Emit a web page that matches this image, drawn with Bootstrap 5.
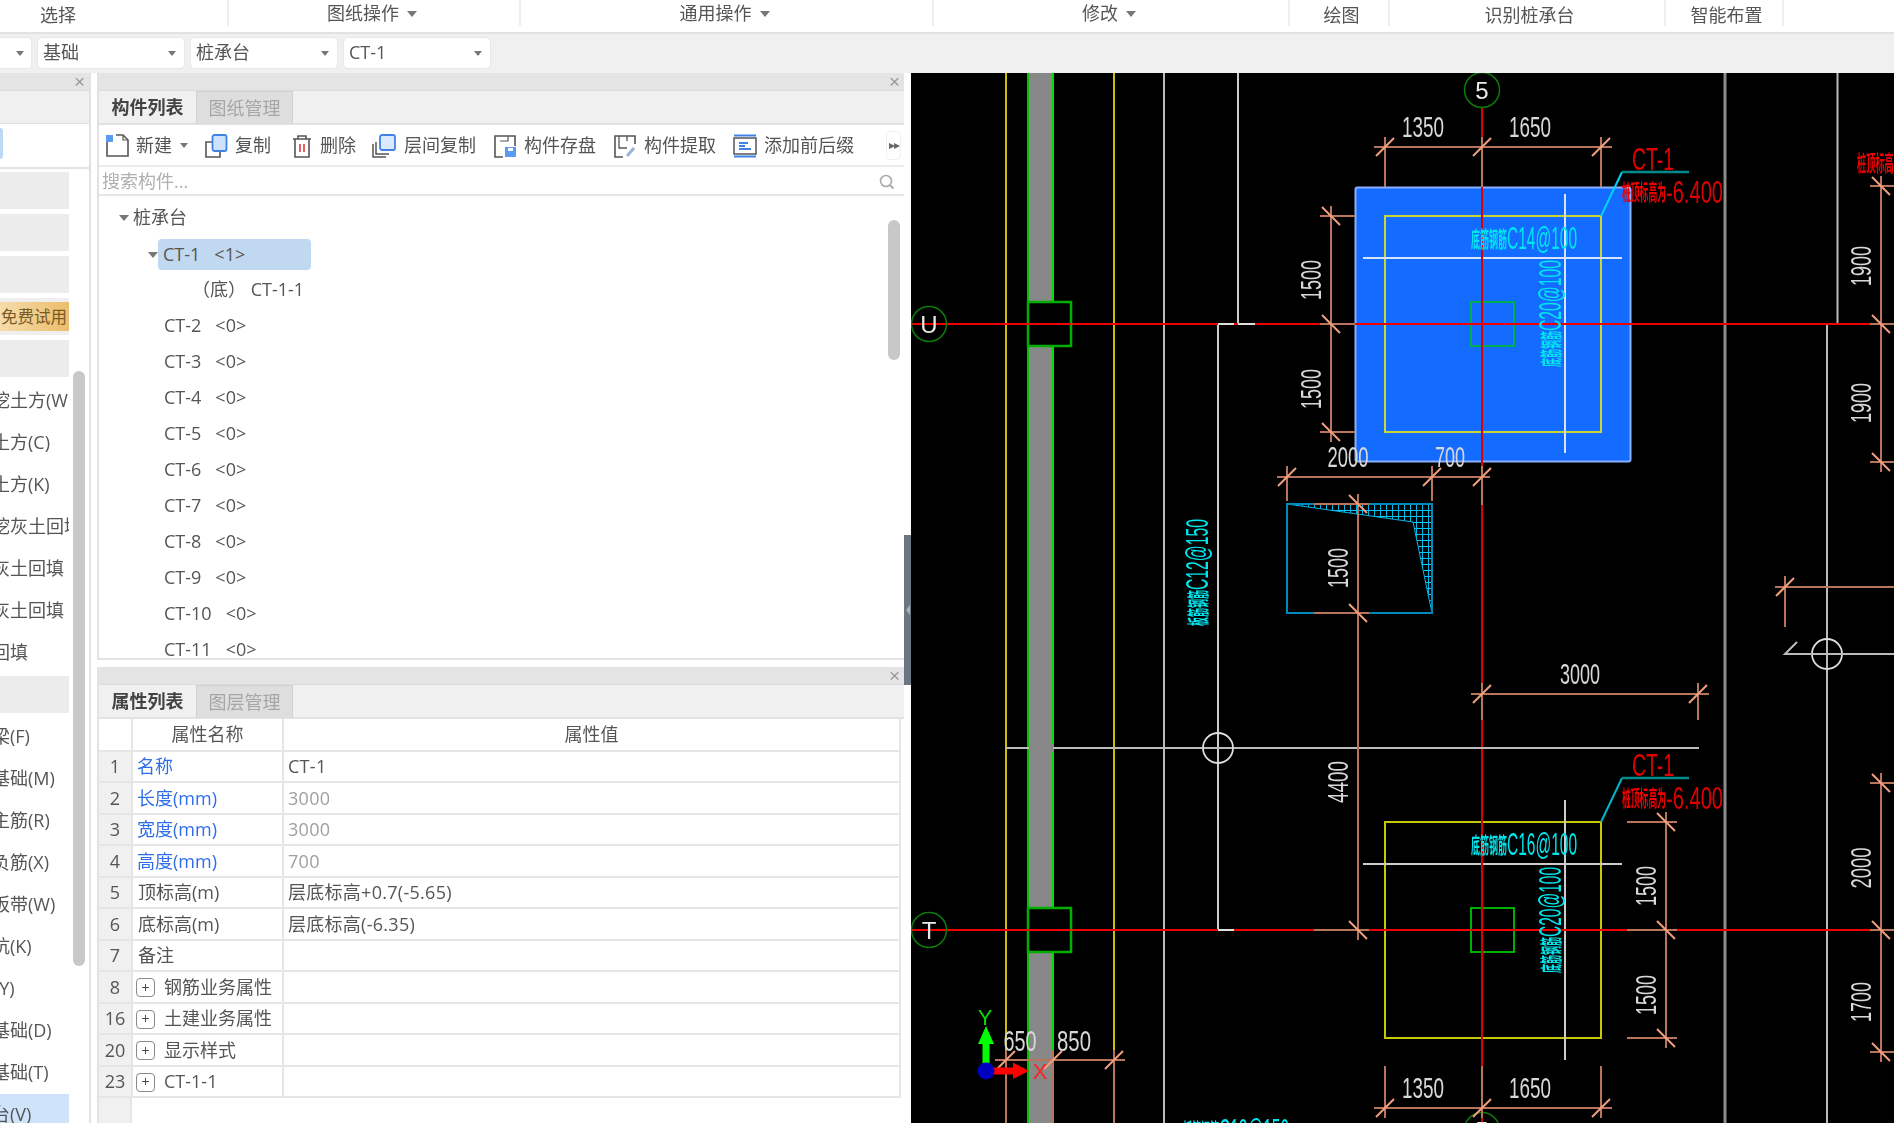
<!DOCTYPE html>
<html lang="zh-CN">
<head>
  <meta charset="UTF-8" />
  <title>桩承台</title>
  <link href="https://cdn.jsdelivr.net/npm/bootstrap@5.3.0/dist/css/bootstrap.min.css" rel="stylesheet" />
  <style>
    body { margin: 0; background: #fff; color: #555; font-family: "Open Sans", "Noto Sans CJK SC", sans-serif; font-size: 18px; line-height: 1.2; overflow: hidden; }
    .app-shell { width: 1894px; height: 1123px; overflow: hidden; filter: blur(.35px); }

    /* ribbon */
    .ribbon { height: 34px; border-bottom: 2px solid #e2e2e2; }
    .rb-cell { height: 26px; border-right: 2px solid #eee; flex: none; padding-top: 6px; }
    .rb-high { padding-top: 1px; padding-right: 4px; }
    .rb-low { padding-left: 5px; }
    .rb-first { width: 229px; padding-left: 40px; justify-content: flex-start !important; }
    .w-292 { width: 292px; } .w-413 { width: 413px; } .w-356 { width: 356px; }
    .w-100px { width: 100px; } .w-276 { width: 276px; } .w-118 { width: 118px; }
    .caret-down { display: inline-block; width: 0; height: 0; border-left: 5px solid transparent; border-right: 5px solid transparent; border-top: 6px solid #777; }
    .caret-sm { border-left-width: 4px; border-right-width: 4px; border-top-width: 5px; }

    /* selector strip */
    .strip { height: 39px; background: #f0f0f0; padding-top: 3px; gap: 5px; }
    .pick { width: 148px; height: 32px; background: #fff; border: 1px solid #e8e8e8; border-radius: 5px; padding: 0 8px 0 5px; flex: none; }
    .pick-stub { width: 32px; justify-content: flex-end !important; padding-right: 7px; border-left: 0; border-radius: 0 5px 5px 0; }

    /* left list */
    .side { width: 91px; flex: none; border-right: 2px solid #e2e2e2; overflow: hidden; position: relative; }
    .pane-head { height: 18px; background: #e4e4e4; border-bottom: 1px solid #dcdcdc; padding-right: 4px; }
    .pane-x { color: #9a9a9a; font-size: 19px; line-height: 16px; font-family: "Liberation Sans", sans-serif; }
    .side-tabs { height: 33px; background: #f0f0f0; border-bottom: 1px solid #ddd; }
    .side-pick { height: 41px; border-bottom: 2px solid #e2e2e2; }
    .side-pill { width: 3px; height: 31px; background: #bcd8f5; border-radius: 0 3px 3px 0; margin-top: 4px; }
    .side-list { padding-top: 1px; }
    .side-row { height: 42px; width: 69px; overflow: hidden; white-space: nowrap; display: flex; align-items: center; }
    .side-row > span { margin-left: -8px; }
    .side-row > span.shift-y { margin-left: -6px; }
    .row-gray { background: #ececec; background-clip: content-box; padding: 2px 0 3px; }
    .row-trial { background: #efefef; background-clip: content-box; padding: 2px 0 3px; }
    .trial-tag { display: block; width: 69px; height: 29px; line-height: 29px; margin: 0 !important; padding-left: 1px; font-size: 16.5px; color: #7b5a25; background: linear-gradient(90deg, #f5dcaa, #ecbd6c); }
    .row-on { background: #cfe3fb; }
    .side-scroll { position: absolute; left: 73px; top: 298px; width: 12px; height: 595px; background: #c8c8c8; border-radius: 6px; }

    .side-gap { width: 6px; flex: none; }

    /* middle panes */
    .mid { width: 807px; flex: none; }
    .pane { border-left: 2px solid #e2e2e2; }
    .pane-up { height: 587px; border-bottom: 2px solid #e2e2e2; overflow: hidden; }
    .pane-down { height: 456px; margin-top: 7px; overflow: hidden; }
    .tabbar { height: 34px; background: #f0f0f0; border-bottom: 2px solid #e2e2e2; }
    .tab-item { width: 97px; height: 33px; line-height: 32px; text-align: center; flex: none; }
    .tab-on { font-weight: 700; color: #444; }
    .tab-off { background: #dedede; color: #a6a6a6; border: 1px solid #d2d2d2; border-bottom: 0; }
    .tools { height: 42px; border-bottom: 2px solid #ececec; padding: 1px 0 0 6px; position: relative; }
    .tool { color: #555; white-space: nowrap; flex: none; }
    .tool svg { flex: none; margin-right: 7px; }
    .tool-new { margin-right: 16px; }
    .tool-copy { margin-right: 20px; }
    .tool-del { margin-right: 16px; }
    .tool-floor { margin-right: 17px; }
    .tool-save { margin-right: 17px; }
    .tool-pick { margin-right: 17px; }
    .tool-more { position: absolute; left: 787px; top: 6px; width: 15px; height: 29px; border: 1px solid #f0f0f0; border-radius: 4px; font-size: 12px; color: #666; letter-spacing: -1px; }
    .finder { height: 29px; border-bottom: 2px solid #e6e6e6; padding: 2px 9px 0 3px; color: #b0b0b0; }
    .tree { height: 464px; padding-top: 4px; position: relative; overflow: hidden; }
    .tree-row { height: 36px; white-space: nowrap; }
    .lv-0 { padding-left: 20px; }
    .lv-1 { padding-left: 65px; }
    .lv-2 { padding-left: 93px; }
    .tree-on { position: relative; margin: 3px 0 2px 59px; padding: 0 5px; width: 153px; height: 31px; background: #c0d8f0; border-radius: 4px; }
    .tree-caret { margin-right: 4px; }
    .tree-caret-abs { position: absolute; left: -10px; top: 13px; }
    .tree-scroll { position: absolute; left: 789px; top: 24px; width: 12px; height: 140px; background: #c8c8c8; border-radius: 6px; }

    /* property grid */
    .prop-grid { width: 802px; table-layout: fixed; margin: 0; border-collapse: collapse; color: #555; }
    .prop-grid th, .prop-grid td { height: 31.5px; padding: 2px 5px 0; border: 0; border-right: 2px solid #e6e6e6; border-bottom: 2px solid #e6e6e6; font-weight: 400; color: #555; background: #fff; white-space: nowrap; vertical-align: middle; box-shadow: none; }
    .prop-grid .col-no { width: 33px; background: #f0f0f0; text-align: center; padding: 2px 0 0; }
    .prop-grid thead .col-no { background: #fff; }
    .prop-grid .col-name { width: 151px; }
    .prop-grid th { text-align: center; }
    .prop-grid td.is-key { color: #2f6ee8; padding-left: 4px; }
    .prop-grid td.is-dim { color: #a0a0a0; }
    .prop-grid td:last-child { padding-left: 4px; letter-spacing: .28px; }
    .plus-box { display: inline-flex; align-items: center; justify-content: center; width: 19px; height: 19px; border: 1px solid #8a8a8a; border-radius: 4px; font-size: 14px; line-height: 1; margin: 0 9px 0 -2px; color: #444; vertical-align: 1px; }
    .grid-foot { width: 33px; height: 40px; background: #f0f0f0; border-right: 2px solid #e6e6e6; }

    /* splitter + canvas */
    .splitter { width: 7px; flex: none; position: relative; }
    .splitter-bar { position: absolute; left: 0; top: 462px; width: 7px; height: 150px; background: #6a7681; }
    .splitter-bar::after { content: ""; position: absolute; left: 2px; top: 70px; border-top: 5px solid transparent; border-bottom: 5px solid transparent; border-right: 4px solid #aab2ba; }
    .cad { width: 983px; height: 1050px; flex: none; background: #000; display: block; }
    .cad text { font-family: "Liberation Sans", "Noto Sans CJK SC", sans-serif; }
    .t-dim { fill: #d8d8d8; font-size: 30px; text-anchor: middle; }
    .t-red { fill: #e00000; font-size: 31px; }
    .t-red-cn { fill: #f00000; font-size: 22px; font-weight: 700; }
    .t-cyan { fill: #00e6ee; font-size: 31px; }
    .t-cyan-cn { fill: #00e6ee; font-size: 22px; font-weight: 700; }
    .d { stroke: #b8755c; stroke-width: 2; fill: none; }
  </style>
</head>
<body>
<div class="app-shell">

  <!-- ribbon -->
  <div class="ribbon d-flex">
    <div class="rb-cell rb-first d-flex align-items-center">选择</div>
    <div class="rb-cell rb-high w-292 d-flex align-items-center justify-content-center gap-2">图纸操作 <span class="caret-down"></span></div>
    <div class="rb-cell rb-high w-413 d-flex align-items-center justify-content-center gap-2">通用操作 <span class="caret-down"></span></div>
    <div class="rb-cell rb-high w-356 d-flex align-items-center justify-content-center gap-2">修改 <span class="caret-down"></span></div>
    <div class="rb-cell rb-low w-100px d-flex align-items-center justify-content-center">绘图</div>
    <div class="rb-cell rb-low w-276 d-flex align-items-center justify-content-center">识别桩承台</div>
    <div class="rb-cell rb-low w-118 d-flex align-items-center justify-content-center">智能布置</div>
  </div>

  <!-- selectors -->
  <div class="strip d-flex">
    <div class="pick pick-stub d-flex align-items-center justify-content-between"><span class="caret-down caret-sm"></span></div>
    <div class="pick d-flex align-items-center justify-content-between">基础 <span class="caret-down caret-sm"></span></div>
    <div class="pick d-flex align-items-center justify-content-between">桩承台 <span class="caret-down caret-sm"></span></div>
    <div class="pick d-flex align-items-center justify-content-between">CT-1 <span class="caret-down caret-sm"></span></div>
  </div>

  <div class="d-flex">
    <!-- left list -->
    <div class="side">
      <div class="pane-head d-flex justify-content-end align-items-center"><span class="pane-x">×</span></div>
      <div class="side-tabs"></div>
      <div class="side-pick"><div class="side-pill"></div></div>
      <div class="side-list">
        <div class="side-row row-gray"></div>
        <div class="side-row row-gray"></div>
        <div class="side-row row-gray"></div>
        <div class="side-row row-trial"><span class="trial-tag">免费试用</span></div>
        <div class="side-row row-gray"></div>
        <div class="side-row"><span>挖土方(W</span></div>
        <div class="side-row"><span>土方(C)</span></div>
        <div class="side-row"><span>土方(K)</span></div>
        <div class="side-row"><span>挖灰土回填</span></div>
        <div class="side-row"><span>灰土回填</span></div>
        <div class="side-row"><span>灰土回填</span></div>
        <div class="side-row"><span>回填</span></div>
        <div class="side-row row-gray"></div>
        <div class="side-row"><span>梁(F)</span></div>
        <div class="side-row"><span>基础(M)</span></div>
        <div class="side-row"><span>主筋(R)</span></div>
        <div class="side-row"><span>负筋(X)</span></div>
        <div class="side-row"><span>板带(W)</span></div>
        <div class="side-row"><span>坑(K)</span></div>
        <div class="side-row"><span class="shift-y">(Y)</span></div>
        <div class="side-row"><span>基础(D)</span></div>
        <div class="side-row"><span>基础(T)</span></div>
        <div class="side-row row-on"><span>台(V)</span></div>
      </div>
      <div class="side-scroll"></div>
    </div>
    <div class="side-gap"></div>

    <!-- middle -->
    <div class="mid">
      <div class="pane pane-up">
        <div class="pane-head d-flex justify-content-end align-items-center"><span class="pane-x">×</span></div>
        <div class="tabbar d-flex">
          <div class="tab-item tab-on">构件列表</div>
          <div class="tab-item tab-off">图纸管理</div>
        </div>
        <div class="tools d-flex align-items-center">
          <div class="tool tool-new d-flex align-items-center">
            <svg width="24" height="24" viewBox="0 0 24 24" fill="none"><path d="M2 8V22H23V6L18 1H11" stroke="#555" stroke-width="1.6"/><path d="M18 1V6H23" stroke="#555" stroke-width="1.2"/><rect x="1" y="1" width="7" height="7" fill="#5a9bf0"/></svg>
            新建 <span class="caret-down caret-sm ms-2"></span>
          </div>
          <div class="tool tool-copy d-flex align-items-center">
            <svg width="24" height="24" viewBox="0 0 24 24" fill="none"><path d="M8 8H2V23H16V18" stroke="#555" stroke-width="1.6"/><rect x="8.5" y="1" width="14" height="16" rx="2" fill="#cfe2fb" stroke="#3f84e5" stroke-width="1.8"/></svg>
            复制
          </div>
          <div class="tool tool-del d-flex align-items-center">
            <svg width="22" height="24" viewBox="0 0 22 24" fill="none"><path d="M2 5H20M7 5V2H15V5M4 5V23H18V5" stroke="#555" stroke-width="1.6"/><path d="M9 10V18M13 10V18" stroke="#e03a3a" stroke-width="1.6"/></svg>
            删除
          </div>
          <div class="tool tool-floor d-flex align-items-center">
            <svg width="25" height="24" viewBox="0 0 25 24" fill="none"><path d="M1 10V23H14M4 8V20H17" stroke="#555" stroke-width="1.5"/><rect x="8" y="1" width="15" height="15" rx="2" fill="#dbe9fc" stroke="#3f84e5" stroke-width="1.8"/></svg>
            层间复制
          </div>
          <div class="tool tool-save d-flex align-items-center">
            <svg width="24" height="24" viewBox="0 0 24 24" fill="none"><path d="M10 23H2V2H22V12" stroke="#555" stroke-width="1.6"/><path d="M15 2V7H7" stroke="#555" stroke-width="1.2"/><rect x="12" y="13" width="11" height="10" fill="#5a9bf0"/><rect x="15" y="14" width="5" height="3" fill="#fff"/></svg>
            构件存盘
          </div>
          <div class="tool tool-pick d-flex align-items-center">
            <svg width="24" height="24" viewBox="0 0 24 24" fill="none"><path d="M10 23H2V2H22V10" stroke="#555" stroke-width="1.6"/><path d="M6 2V14H14M14 2V7" stroke="#555" stroke-width="1.3"/><path d="M14 22L21 14" stroke="#9ab4d8" stroke-width="3"/></svg>
            构件提取
          </div>
          <div class="tool d-flex align-items-center">
            <svg width="24" height="24" viewBox="0 0 24 24" fill="none"><rect x="1" y="4" width="22" height="16" stroke="#555" stroke-width="1.5"/><path d="M1 1.5H23M1 22.5H23M6 9H15M6 12H12M6 15H18" stroke="#3f84e5" stroke-width="1.8"/></svg>
            添加前后缀
          </div>
          <div class="tool-more d-flex align-items-center justify-content-center">▸▸</div>
        </div>
        <div class="finder d-flex align-items-center justify-content-between">
          <span>搜索构件...</span>
          <svg width="16" height="16" viewBox="0 0 16 16" fill="none"><circle cx="7" cy="7" r="5.5" stroke="#aaa" stroke-width="1.6"/><path d="M11 11L14.5 14.5" stroke="#aaa" stroke-width="1.8"/></svg>
        </div>
        <div class="tree">
          <div class="tree-row lv-0 d-flex align-items-center"><span class="caret-down tree-caret"></span>桩承台</div>
          <div class="tree-on d-flex align-items-center"><span class="caret-down tree-caret-abs"></span>CT-1&nbsp;&nbsp;&nbsp;&lt;1&gt;</div>
          <div class="tree-row lv-2 d-flex align-items-center">（底）&nbsp;CT-1-1</div>
          <div class="tree-row lv-1 d-flex align-items-center">CT-2&nbsp;&nbsp;&nbsp;&lt;0&gt;</div>
          <div class="tree-row lv-1 d-flex align-items-center">CT-3&nbsp;&nbsp;&nbsp;&lt;0&gt;</div>
          <div class="tree-row lv-1 d-flex align-items-center">CT-4&nbsp;&nbsp;&nbsp;&lt;0&gt;</div>
          <div class="tree-row lv-1 d-flex align-items-center">CT-5&nbsp;&nbsp;&nbsp;&lt;0&gt;</div>
          <div class="tree-row lv-1 d-flex align-items-center">CT-6&nbsp;&nbsp;&nbsp;&lt;0&gt;</div>
          <div class="tree-row lv-1 d-flex align-items-center">CT-7&nbsp;&nbsp;&nbsp;&lt;0&gt;</div>
          <div class="tree-row lv-1 d-flex align-items-center">CT-8&nbsp;&nbsp;&nbsp;&lt;0&gt;</div>
          <div class="tree-row lv-1 d-flex align-items-center">CT-9&nbsp;&nbsp;&nbsp;&lt;0&gt;</div>
          <div class="tree-row lv-1 d-flex align-items-center">CT-10&nbsp;&nbsp;&nbsp;&lt;0&gt;</div>
          <div class="tree-row lv-1 d-flex align-items-center">CT-11&nbsp;&nbsp;&nbsp;&lt;0&gt;</div>
          <div class="tree-scroll"></div>
        </div>
      </div>

      <div class="pane pane-down">
        <div class="pane-head d-flex justify-content-end align-items-center"><span class="pane-x">×</span></div>
        <div class="tabbar d-flex">
          <div class="tab-item tab-on">属性列表</div>
          <div class="tab-item tab-off">图层管理</div>
        </div>
        <table class="table prop-grid">
          <thead>
            <tr><th class="col-no"></th><th class="col-name">属性名称</th><th>属性值</th></tr>
          </thead>
          <tbody>
            <tr><td class="col-no">1</td><td class="is-key">名称</td><td>CT-1</td></tr>
            <tr><td class="col-no">2</td><td class="is-key">长度(mm)</td><td class="is-dim">3000</td></tr>
            <tr><td class="col-no">3</td><td class="is-key">宽度(mm)</td><td class="is-dim">3000</td></tr>
            <tr><td class="col-no">4</td><td class="is-key">高度(mm)</td><td class="is-dim">700</td></tr>
            <tr><td class="col-no">5</td><td>顶标高(m)</td><td>层底标高+0.7(-5.65)</td></tr>
            <tr><td class="col-no">6</td><td>底标高(m)</td><td>层底标高(-6.35)</td></tr>
            <tr><td class="col-no">7</td><td>备注</td><td></td></tr>
            <tr><td class="col-no">8</td><td><span class="plus-box">+</span>钢筋业务属性</td><td></td></tr>
            <tr><td class="col-no">16</td><td><span class="plus-box">+</span>土建业务属性</td><td></td></tr>
            <tr><td class="col-no">20</td><td><span class="plus-box">+</span>显示样式</td><td></td></tr>
            <tr><td class="col-no">23</td><td><span class="plus-box">+</span>CT-1-1</td><td></td></tr>
          </tbody>
        </table>
        <div class="grid-foot"></div>
      </div>
    </div>

    <div class="splitter"><div class="splitter-bar"></div></div>

    <!-- CAD canvas -->
    <svg class="cad" width="983" height="1050" viewBox="911 73 983 1050" xmlns="http://www.w3.org/2000/svg">
      <defs>
        <path id="tick-h" d="M-9 9L9 -9" stroke="#f0a07e" stroke-width="2"/>
        <path id="tick-v" d="M-9 -9L9 9" stroke="#f0a07e" stroke-width="2"/>
        <pattern id="mesh" width="6" height="6" patternUnits="userSpaceOnUse">
          <path d="M0 0H6M0 0V6" stroke="#00c8ff" stroke-width="1.8"/>
        </pattern>
      </defs>

      <!-- long verticals -->
      <path d="M1006 73V1050M1114 73V1050" stroke="#c8c000" stroke-width="2"/>
      <rect x="1028" y="73" width="25" height="1050" fill="#888"/>
      <path d="M1028 73V1123" stroke="#00c000" stroke-width="2"/>
      <path d="M1053 73V1050" stroke="#00e000" stroke-width="2"/>
      <path d="M1164 73V1123" stroke="#bbb" stroke-width="2"/>
      <path d="M1238 73V324M1218 324V930" stroke="#ccc" stroke-width="2"/>
      <path d="M1725 73V1123" stroke="#8c8c8c" stroke-width="3"/>
      <path d="M1837.5 73V324M1827 324V1123" stroke="#bbb" stroke-width="2"/>

      <!-- foundation 1 -->
      <rect x="1355.5" y="187.5" width="275" height="274" fill="#146bff" stroke="#8ab0ff" stroke-width="2" rx="2"/>
      <rect x="1385" y="216" width="216" height="216" fill="none" stroke="#c8d838" stroke-width="2"/>
      <path d="M1363 258H1622M1565 194V453" stroke="#d6e4ff" stroke-width="2"/>
      <rect x="1471" y="302" width="43" height="44" fill="none" stroke="#00b050" stroke-width="2"/>

      <!-- foundation 2 -->
      <rect x="1385" y="822" width="216" height="216" fill="none" stroke="#c8c800" stroke-width="2"/>
      <path d="M1363 864H1622M1565 800V1060" stroke="#ccc" stroke-width="2"/>
      <rect x="1471" y="908" width="43" height="44" fill="none" stroke="#00b000" stroke-width="2"/>

      <!-- red axes -->
      <path d="M1482 107V1123" stroke="#d80000" stroke-width="2"/>
      <path d="M912 324H1894M912 930H1894" stroke="#f00000" stroke-width="2"/>

      <!-- column stubs -->
      <path d="M1028 302H1071V346H1028Z" fill="#000" stroke="#00b000" stroke-width="2.5"/>
      <path d="M1028 908H1071V952H1028Z" fill="#000" stroke="#00b000" stroke-width="2.5"/>
      <path d="M912 324H1071M912 930H1071" stroke="#f00000" stroke-width="2"/>
      <path d="M1218 324H1234M1238 324H1255M1218 930H1234" stroke="#ddd" stroke-width="2"/>
      <path d="M1006 748H1699" stroke="#bbb" stroke-width="2"/>
      <rect x="1029" y="744" width="24" height="8" fill="#888"/>

      <!-- grid bubbles -->
      <g fill="none" stroke="#0a7a0a" stroke-width="1.5">
        <circle cx="929" cy="324" r="17.5"/>
        <circle cx="929" cy="930" r="17.5"/>
        <circle cx="1482" cy="90" r="17.5"/>
        <circle cx="1482" cy="1130" r="17.5"/>
      </g>
      <g fill="#e8e8e8" text-anchor="middle" font-size="24">
        <text x="929" y="333">U</text>
        <text x="929" y="939">T</text>
        <text x="1482" y="99">5</text>
        <text x="1482" y="1139">5</text>
      </g>
      <circle cx="1218" cy="748" r="15" fill="none" stroke="#ddd" stroke-width="1.8"/>
      <circle cx="1827" cy="654" r="15" fill="none" stroke="#ddd" stroke-width="1.8"/>
      <path d="M1797 642L1785 654H1894" fill="none" stroke="#bbb" stroke-width="2"/>

      <!-- hatched shape -->
      <path d="M1287 504L1432 504V613L1413 522Z" fill="url(#mesh)" stroke="#00b4e4" stroke-width="1"/>
      <path d="M1432 504H1287V613H1432Z" fill="none" stroke="#0088b8" stroke-width="2"/>

      <!-- dimension lines -->
      <g class="d">
        <!-- top 1350/1650 -->
        <path d="M1374 147H1612M1385 137V187M1482 137V187M1601 137V187"/>
        <!-- left 1500/1500 -->
        <path d="M1331 206V442M1320 216H1355M1320 324H1355M1320 432H1355"/>
        <!-- 2000/700 -->
        <path d="M1277 477H1490M1287 466V501M1432 466V501M1482 466V505"/>
        <!-- 1500/4400 -->
        <path d="M1358 494V940M1314 504H1369M1314 613H1369M1314 930H1369"/>
        <!-- 3000 -->
        <path d="M1471 694H1709M1482 683V720M1698 683V720"/>
        <!-- right edge -->
        <path d="M1881 176V472M1870 186H1894M1870 324H1894M1870 462H1894"/>
        <path d="M1881 773V1062M1870 783H1894M1870 930H1894M1870 1052H1894"/>
        <path d="M1775 587H1894M1785 576V627"/>
        <!-- foundation 2 right -->
        <path d="M1666 812V1048M1627 822H1677M1627 930H1677M1627 1038H1677"/>
        <!-- foundation 2 bottom -->
        <path d="M1374 1108H1612M1385 1066V1118M1482 1066V1118M1601 1066V1118"/>
        <!-- column bottom -->
        <path d="M995 1060H1125M1006 1050V1123M1053 1050V1123M1114 1050V1123"/>
      </g>
      <g>
        <use href="#tick-h" x="1385" y="147"/><use href="#tick-h" x="1482" y="147"/><use href="#tick-h" x="1601" y="147"/>
        <use href="#tick-v" x="1331" y="216"/><use href="#tick-v" x="1331" y="324"/><use href="#tick-v" x="1331" y="432"/>
        <use href="#tick-h" x="1287" y="477"/><use href="#tick-h" x="1432" y="477"/><use href="#tick-h" x="1482" y="477"/>
        <use href="#tick-v" x="1358" y="504"/><use href="#tick-v" x="1358" y="613"/><use href="#tick-v" x="1358" y="930"/>
        <use href="#tick-h" x="1482" y="694"/><use href="#tick-h" x="1698" y="694"/>
        <use href="#tick-v" x="1881" y="186"/><use href="#tick-v" x="1881" y="324"/><use href="#tick-v" x="1881" y="462"/>
        <use href="#tick-v" x="1881" y="783"/><use href="#tick-v" x="1881" y="930"/><use href="#tick-v" x="1881" y="1052"/>
        <use href="#tick-h" x="1785" y="587"/>
        <use href="#tick-v" x="1666" y="822"/><use href="#tick-v" x="1666" y="930"/><use href="#tick-v" x="1666" y="1038"/>
        <use href="#tick-h" x="1385" y="1108"/><use href="#tick-h" x="1482" y="1108"/><use href="#tick-h" x="1601" y="1108"/>
        <use href="#tick-h" x="1006" y="1060"/><use href="#tick-h" x="1053" y="1060"/><use href="#tick-h" x="1114" y="1060"/>
      </g>

      <!-- dimension text -->
      <text class="t-dim" x="1423" y="137" textLength="42" lengthAdjust="spacingAndGlyphs">1350</text>
      <text class="t-dim" x="1530" y="137" textLength="42" lengthAdjust="spacingAndGlyphs">1650</text>
      <text class="t-dim" x="1423" y="1098" textLength="42" lengthAdjust="spacingAndGlyphs">1350</text>
      <text class="t-dim" x="1530" y="1098" textLength="42" lengthAdjust="spacingAndGlyphs">1650</text>
      <text class="t-dim" x="1348" y="467" textLength="41" lengthAdjust="spacingAndGlyphs">2000</text>
      <text class="t-dim" x="1450" y="467" textLength="30" lengthAdjust="spacingAndGlyphs">700</text>
      <text class="t-dim" x="1580" y="684" textLength="40" lengthAdjust="spacingAndGlyphs">3000</text>
      <text class="t-dim" x="1020" y="1051" textLength="33" lengthAdjust="spacingAndGlyphs">650</text>
      <text class="t-dim" x="1074" y="1051" textLength="34" lengthAdjust="spacingAndGlyphs">850</text>
      <text class="t-dim" transform="rotate(-90 1310 280)" x="1310" y="291" textLength="40" lengthAdjust="spacingAndGlyphs">1500</text>
      <text class="t-dim" transform="rotate(-90 1310 389)" x="1310" y="400" textLength="40" lengthAdjust="spacingAndGlyphs">1500</text>
      <text class="t-dim" transform="rotate(-90 1337 568)" x="1337" y="579" textLength="40" lengthAdjust="spacingAndGlyphs">1500</text>
      <text class="t-dim" transform="rotate(-90 1337 782)" x="1337" y="793" textLength="42" lengthAdjust="spacingAndGlyphs">4400</text>
      <text class="t-dim" transform="rotate(-90 1860 266)" x="1860" y="277" textLength="40" lengthAdjust="spacingAndGlyphs">1900</text>
      <text class="t-dim" transform="rotate(-90 1860 403)" x="1860" y="414" textLength="40" lengthAdjust="spacingAndGlyphs">1900</text>
      <text class="t-dim" transform="rotate(-90 1860 868)" x="1860" y="879" textLength="41" lengthAdjust="spacingAndGlyphs">2000</text>
      <text class="t-dim" transform="rotate(-90 1860 1002)" x="1860" y="1013" textLength="40" lengthAdjust="spacingAndGlyphs">1700</text>
      <text class="t-dim" transform="rotate(-90 1645 886)" x="1645" y="897" textLength="40" lengthAdjust="spacingAndGlyphs">1500</text>
      <text class="t-dim" transform="rotate(-90 1645 995)" x="1645" y="1006" textLength="40" lengthAdjust="spacingAndGlyphs">1500</text>

      <!-- leaders and labels -->
      <path d="M1601 216L1622 172" stroke="#00d4f0" stroke-width="2" fill="none"/>
      <path d="M1622 172H1689" stroke="#008c8c" stroke-width="2.5" fill="none"/>
      <path d="M1601 822L1622 778" stroke="#00b8c8" stroke-width="2" fill="none"/>
      <path d="M1622 778H1689" stroke="#008c8c" stroke-width="2.5" fill="none"/>
      <text class="t-red" x="1632" y="170" textLength="42" lengthAdjust="spacingAndGlyphs">CT-1</text>
      <text class="t-red-cn" x="1622" y="200" textLength="44" lengthAdjust="spacingAndGlyphs">桩顶标高为</text>
      <text class="t-red" x="1666" y="203" textLength="57" lengthAdjust="spacingAndGlyphs">-6.400</text>
      <text class="t-red" x="1632" y="776" textLength="42" lengthAdjust="spacingAndGlyphs">CT-1</text>
      <text class="t-red-cn" x="1622" y="806" textLength="44" lengthAdjust="spacingAndGlyphs">桩顶标高为</text>
      <text class="t-red" x="1666" y="809" textLength="57" lengthAdjust="spacingAndGlyphs">-6.400</text>
      <text class="t-red-cn" x="1857" y="171" textLength="46" lengthAdjust="spacingAndGlyphs">桩顶标高为</text>

      <text class="t-cyan-cn" x="1471" y="247" textLength="36" lengthAdjust="spacingAndGlyphs">底筋钢筋</text>
      <text class="t-cyan" x="1507" y="249" textLength="70" lengthAdjust="spacingAndGlyphs">C14@100</text>
      <text class="t-cyan-cn" x="1471" y="853" textLength="36" lengthAdjust="spacingAndGlyphs">底筋钢筋</text>
      <text class="t-cyan" x="1507" y="855" textLength="70" lengthAdjust="spacingAndGlyphs">C16@100</text>
      <text class="t-cyan-cn" transform="rotate(-90 1559 367)" x="1559" y="367" textLength="36" lengthAdjust="spacingAndGlyphs">底筋钢筋</text>
      <text class="t-cyan" transform="rotate(-90 1561 331)" x="1561" y="331" textLength="71" lengthAdjust="spacingAndGlyphs">C20@100</text>
      <text class="t-cyan-cn" transform="rotate(-90 1559 973)" x="1559" y="973" textLength="36" lengthAdjust="spacingAndGlyphs">底筋钢筋</text>
      <text class="t-cyan" transform="rotate(-90 1561 937)" x="1561" y="937" textLength="70" lengthAdjust="spacingAndGlyphs">C20@100</text>
      <text class="t-cyan-cn" transform="rotate(-90 1206 626)" x="1206" y="626" textLength="36" lengthAdjust="spacingAndGlyphs">板筋钢筋</text>
      <text class="t-cyan" transform="rotate(-90 1208 590)" x="1208" y="590" textLength="71" lengthAdjust="spacingAndGlyphs">C12@150</text>
      <text class="t-cyan-cn" x="1183" y="1139" textLength="36" lengthAdjust="spacingAndGlyphs">板筋钢筋</text>
      <text class="t-cyan" x="1219" y="1141" textLength="70" lengthAdjust="spacingAndGlyphs">C12@150</text>

      <!-- axis gizmo -->
      <path d="M986 1026L994 1044H989.5V1066H982.5V1044H978Z" fill="#00ff00"/>
      <path d="M993 1067.5H1013V1062.5L1029 1071L1013 1079V1074.5H993Z" fill="#ff0000"/>
      <circle cx="986" cy="1071" r="8.5" fill="#0000c0"/>
      <text x="985" y="1025" fill="#00e000" font-size="22" text-anchor="middle">Y</text>
      <text x="1040" y="1079" fill="#ff2020" font-size="22" text-anchor="middle">X</text>
    </svg>
  </div>
</div>
<script src="https://cdn.jsdelivr.net/npm/bootstrap@5.3.0/dist/js/bootstrap.bundle.min.js"></script>
</body>
</html>
